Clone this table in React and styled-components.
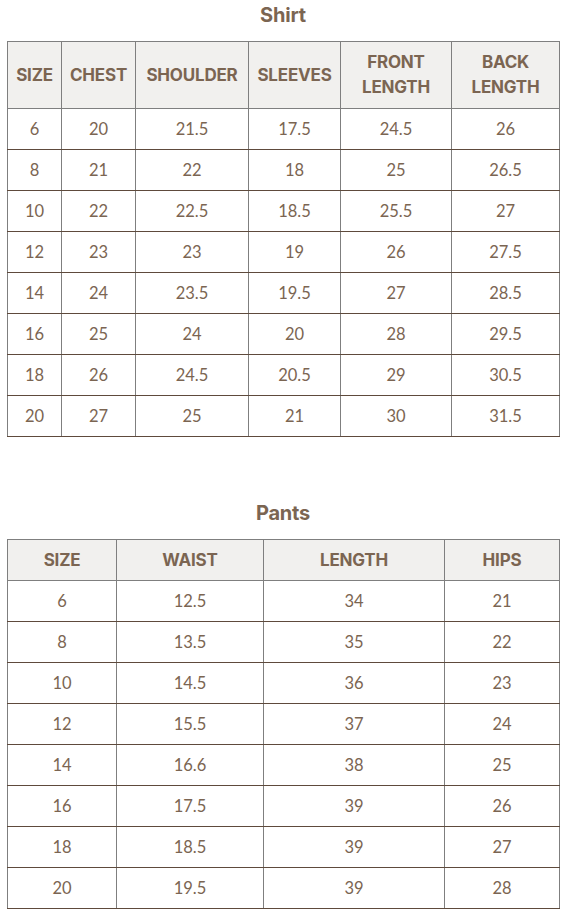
import React from "react";
import styled, { createGlobalStyle } from "styled-components";

const shirt = {
  title: "Shirt",
  cols: [54, 74, 113, 92, 111, 108],
  head: ["SIZE", "CHEST", "SHOULDER", "SLEEVES", "FRONT LENGTH", "BACK LENGTH"],
  rows: [
    ["6", "20", "21.5", "17.5", "24.5", "26"],
    ["8", "21", "22", "18", "25", "26.5"],
    ["10", "22", "22.5", "18.5", "25.5", "27"],
    ["12", "23", "23", "19", "26", "27.5"],
    ["14", "24", "23.5", "19.5", "27", "28.5"],
    ["16", "25", "24", "20", "28", "29.5"],
    ["18", "26", "24.5", "20.5", "29", "30.5"],
    ["20", "27", "25", "21", "30", "31.5"],
  ],
};

const pants = {
  title: "Pants",
  cols: [109, 147, 181, 115],
  head: ["SIZE", "WAIST", "LENGTH", "HIPS"],
  rows: [
    ["6", "12.5", "34", "21"],
    ["8", "13.5", "35", "22"],
    ["10", "14.5", "36", "23"],
    ["12", "15.5", "37", "24"],
    ["14", "16.6", "38", "25"],
    ["16", "17.5", "39", "26"],
    ["18", "18.5", "39", "27"],
    ["20", "19.5", "39", "28"],
  ],
};

const SizeTable = ({ data, headHeight }) => (
  <Section>
    <Title>{data.title}</Title>
    <Table>
      <colgroup>
        {data.cols.map((w, i) => (
          <col key={i} style={{ width: w }} />
        ))}
      </colgroup>
      <thead>
        <tr>
          {data.head.map((h) => (
            <Th key={h} height={headHeight}>{h}</Th>
          ))}
        </tr>
      </thead>
      <tbody>
        {data.rows.map((r, i) => (
          <tr key={i}>
            {r.map((c, j) => (
              <Td key={j}>{c}</Td>
            ))}
          </tr>
        ))}
      </tbody>
    </Table>
  </Section>
);

const App = () => {
  return (
    <>
      <GlobalStyle />
      <Page>
        <SizeTable data={shirt} headHeight={66} />
        <SizeTable data={pants} headHeight={40} />
      </Page>
    </>
  );
};

export default App;

const GlobalStyle = createGlobalStyle`
  body {
    margin: 0;
    background: #fff;
    font-family: "Lato", "Liberation Sans", sans-serif;
    color: #7b6552;
  }
`;

const Page = styled.div`
  padding: 0 7px;
  display: flex;
  flex-direction: column;
  gap: 61px;
`;

const Section = styled.div`
  display: flex;
  flex-direction: column;
`;

const Title = styled.h2`
  margin: 0;
  height: 41px;
  line-height: 31px;
  text-align: center;
  font-family: "Inter", "Lato", sans-serif;
  font-size: 20px;
  font-weight: 700;
  letter-spacing: -0.2px;
  color: #7b6552;
`;

const Table = styled.table`
  width: 552px;
  border-collapse: collapse;
  table-layout: fixed;
`;

const Th = styled.th`
  height: ${({ height }) => height}px;
  padding: 0 2px;
  background: #f1f0ee;
  border: 1px solid #7f7f7f;
  font-family: "Inter", "Lato", sans-serif;
  font-size: 17px;
  font-weight: 700;
  letter-spacing: -0.2px;
  line-height: 25px;
  text-align: center;
  color: #7b6552;
`;

const Td = styled.td`
  height: 40px;
  padding: 0;
  border: 1px solid #7f7f7f;
  border-bottom-color: #5e4a3c;
  font-size: 16.5px;
  text-align: center;
  color: #7b6552;
`;
